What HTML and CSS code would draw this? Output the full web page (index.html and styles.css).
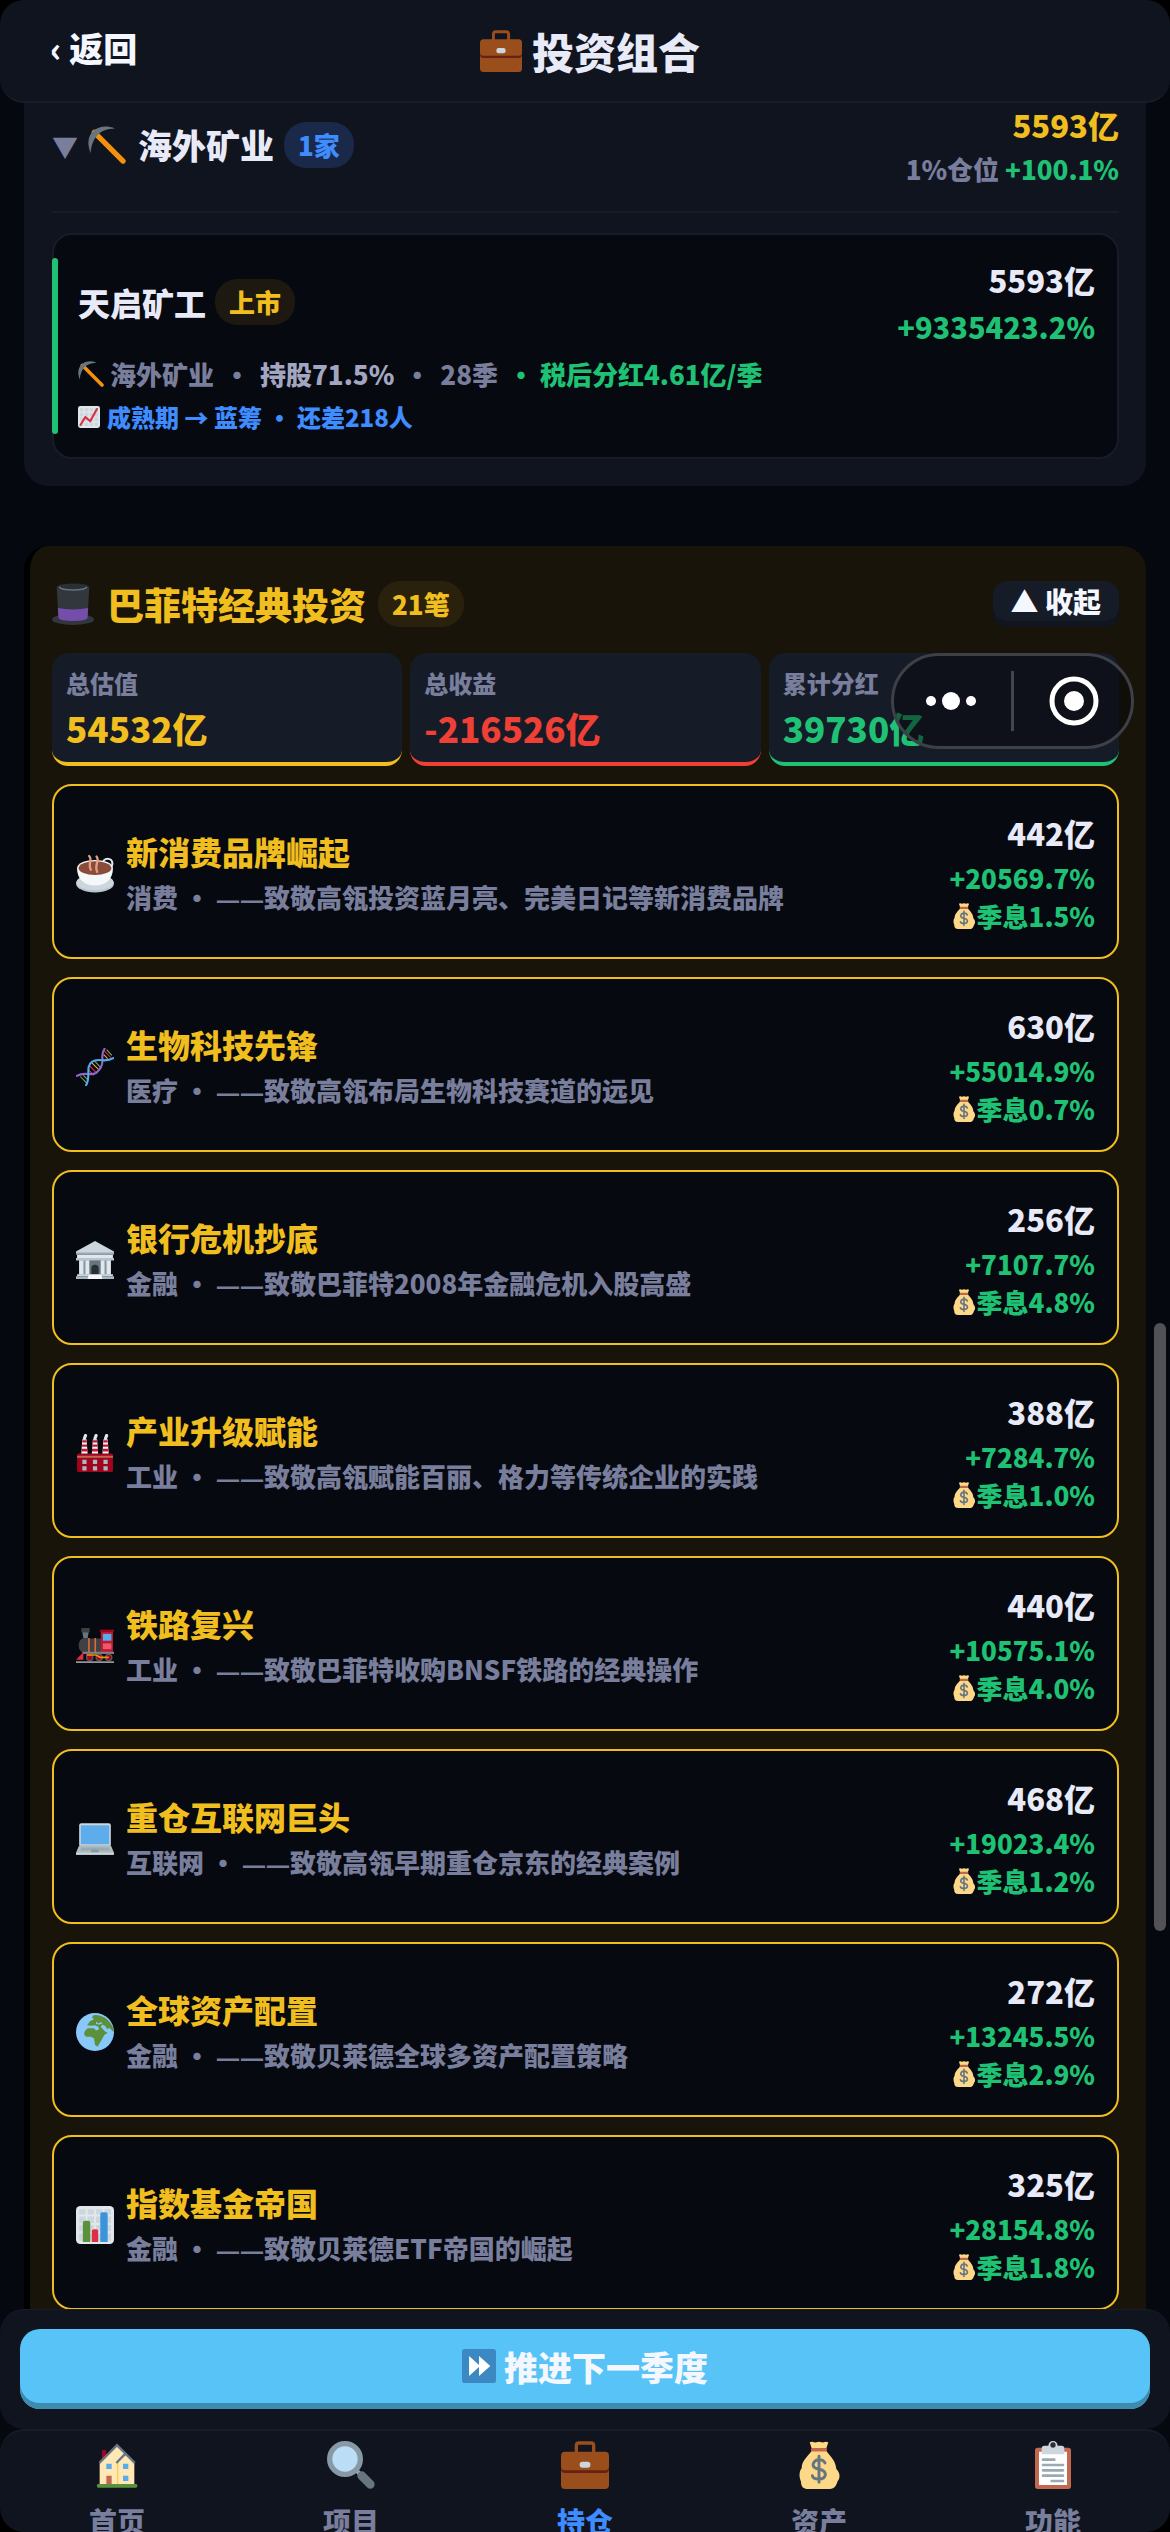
FILE: index.html
```
<!DOCTYPE html>
<html lang="zh-CN">
<head>
<meta charset="utf-8">
<meta name="viewport" content="width=device-width, initial-scale=1">
<title>投资组合</title>
<link rel="stylesheet" href="styles.css">
</head>
<body>
<svg class="sprite" aria-hidden="true">
  <symbol id="i-case" viewBox="0 0 36 36">
    <path d="M11.500 9V3.500Q11.500 1.500 13.500 1.500H22.500Q24.500 1.500 24.500 3.500V9" fill="none" stroke="#9a4e1c" stroke-width="2.500"/>
    <path d="M3 8H33Q36 8 36 11V33Q36 36 33 36H3Q0 36 0 33V11Q0 8 3 8Z" fill="#9a4e1c"/>
    <path d="M0 19Q0 22 3 22H33Q36 22 36 19V21Q36 24 33 24H3Q0 24 0 21Z" fill="#662113"/>
    <rect x="14" y="15.500" width="8" height="4.500" rx="2" fill="#ccd6dd"/>
  </symbol>
  <symbol id="i-pick" viewBox="0 0 36 36">
    <path d="M6 6L33.200 33.200" stroke="#f4900c" stroke-width="5" stroke-linecap="round"/>
    <path d="M2.500 25.700C-1.500 16 .5 9 5 4.800C10 0 18 -.8 25.600 2.300C18 2.600 13 4.600 9.600 8C5.500 12 3 18 2.500 25.700Z" fill="#66757f"/>
  </symbol>
  <symbol id="i-rise" viewBox="0 0 36 36">
    <rect width="36" height="36" rx="4" fill="#e1e8ed"/>
    <path d="M3 3h6v6H3zM11 3h6v6h-6zM19 3h6v6h-6zM27 3h6v6h-6zM3 11h6v6H3zM11 11h6v6h-6zM19 11h6v6h-6zM27 11h6v6h-6zM3 19h6v6H3zM11 19h6v6h-6zM19 19h6v6h-6zM27 19h6v6h-6zM3 27h6v6H3zM11 27h6v6h-6zM19 27h6v6h-6zM27 27h6v6h-6z" fill="#ccd6dd"/>
    <path d="M4 31L12 18L20 25L31 5" fill="none" stroke="#dd2e44" stroke-width="3.500" stroke-linecap="round" stroke-linejoin="round"/>
  </symbol>
  <symbol id="i-bars" viewBox="0 0 36 36">
    <rect width="36" height="36" rx="4" fill="#e1e8ed"/>
    <path d="M3 3h6v5H3zM11 3h6v5h-6zM19 3h6v5h-6zM27 3h6v5h-6zM3 10h6v6H3zM11 10h6v6h-6zM19 10h6v6h-6zM27 10h6v6h-6zM3 18h6v6H3zM11 18h6v6h-6zM19 18h6v6h-6zM27 18h6v6h-6zM3 26h6v7H3zM11 26h6v7h-6zM19 26h6v7h-6zM27 26h6v7h-6z" fill="#ccd6dd"/>
    <path d="M6.500 34V16q0-2 2-2h3q2 0 2 2v18z" fill="#5c913b"/>
    <path d="M15 34V24q0-2 2-2h2q2 0 2 2v10z" fill="#dd2e44"/>
    <path d="M23 34V8q0-2 2-2h3q2 0 2 2v26z" fill="#3b94d9"/>
  </symbol>
  <symbol id="i-hat" viewBox="0 0 36 36">
    <ellipse cx="18" cy="31.200" rx="18" ry="4.800" fill="#31373d"/>
    <path d="M4 3.500H32L30.500 29Q30 32 18 32Q6 32 5.500 29Z" fill="#31373d"/>
    <path d="M5 21.500Q18 24 31 21.500L30.500 30Q29 32.500 18 32.500Q7 32.500 5.500 30Z" fill="#744eaa"/>
    <ellipse cx="18" cy="3.600" rx="14" ry="3.200" fill="#292f33"/>
    <path d="M6 3.500Q8 6 18 6T30 3.500" fill="none" stroke="#66757f" stroke-width="1.300"/>
  </symbol>
  <symbol id="i-cup" viewBox="0 0 36 36">
    <ellipse cx="18" cy="27" rx="18" ry="8.500" fill="#b8c5cd"/>
    <ellipse cx="18" cy="26" rx="17.500" ry="7.500" fill="#ccd6dd"/>
    <circle cx="30" cy="8" r="4.500" fill="none" stroke="#e1e8ed" stroke-width="2"/>
    <path d="M1 12.500C1 2 35 2 35 12.500C35 22 29 29 18 29S1 22 1 12.500Z" fill="#f5f8fa"/>
    <ellipse cx="18" cy="12.500" rx="15.500" ry="6.500" fill="#8a4b38"/>
    <path d="M12.500 1C16 4 11 8 14 14M19.500 1.500C23 5 17 9 20 16" fill="none" stroke="#e39f85" stroke-width="2.200" stroke-linecap="round"/>
  </symbol>
  <symbol id="i-dna" viewBox="0 0 36 36">
    <path d="M4 27L10 33M7 26L11 30" stroke="#77b255" stroke-width="1"/>
    <path d="M12 21L17 26M13 17L20 24M27 3L33 9" stroke="#dd2e44" stroke-width="1"/>
    <path d="M15 14L22 21M26 6L30 10" stroke="#ffac33" stroke-width="1"/>
    <path d="M18 13L24 19M29 1.500L34 7" stroke="#77b255" stroke-width="1"/>
    <path d="M.8 26.500C8 22 14 27 19 23.500C25 19 25.500 14 25 9.500C24.600 5 25.500 3 27 .8" fill="none" stroke="#9266cc" stroke-width="2" stroke-linecap="round"/>
    <path d="M9.500 35.300C13 30 11 23 12 18C13.500 11 20 11 25 11.600C30 12 33 11 35.300 9.500" fill="none" stroke="#55acee" stroke-width="2" stroke-linecap="round"/>
  </symbol>
  <symbol id="i-bank" viewBox="0 0 36 36">
    <path d="M3 18H33V33H3Z" fill="#8899a6"/>
    <path d="M18 0L36 10V12H0V10Z" fill="#ccd6dd"/>
    <path d="M0 11H36V13H0Z" fill="#9aaab4"/>
    <path d="M1 13H35V16H1Z" fill="#e1e8ed"/>
    <path d="M0 16H36V18.500H0Z" fill="#b8c5cd"/>
    <path d="M3 18.500h4v13H3zM9 18.500h3.500v13H9zM23.500 18.500H27v13h-3.500zM29 18.500h4v13h-4z" fill="#e1e8ed"/>
    <path d="M13 18.500h10V32H13z" fill="#66757f"/>
    <path d="M14.500 32V26Q14.500 22.500 18 22.500T21.500 26V32Z" fill="#292f33"/>
    <path d="M1 31.500H35V33.500H1Z" fill="#ccd6dd"/><path d="M0 33.500H36V36H0Z" fill="#aab8c2"/>
    <path d="M12 32H24L25 36H11Z" fill="#f5f8fa"/>
  </symbol>
  <symbol id="i-factory" viewBox="0 0 36 36">
    <path d="M6 5h4l1 14H5zM16 5h4l1 14h-6zM26 5h4l1 14h-6z" fill="#f5f8fa"/>
    <path d="M6 6h4v2H6zM5.500 10h5v2h-5zM5.200 14h5.600v2.500H5.200zM16 6h4v2h-4zM15.500 10h5v2h-5zM15.200 14h5.600v2.500h-5.600zM26 6h4v2h-4zM25.500 10h5v2h-5zM25.200 14h5.600v2.500h-5.600z" fill="#be1931"/>
    <path d="M8 4L9 1.500M18 4L19 1.500M28 4L29 1.500" stroke="#e1e8ed" stroke-width="3" stroke-linecap="round"/>
    <rect x="1" y="18.500" width="34" height="17.500" rx="1.500" fill="#a0041e"/>
    <path d="M1 20.500H35V22.500H1Z" fill="#c1694f"/>
    <path d="M6 24.500h4v4H6zM16 24.500h4v4h-4zM26 24.500h4v4h-4zM6 30.500h4v4H6zM16 30.500h4v4h-4zM26 30.500h4v4h-4z" fill="#aab8c2"/>
  </symbol>
  <symbol id="i-train" viewBox="0 0 36 36">
    <path d="M5 1h8v4H5z" fill="#414042"/><path d="M6 5h6l-1 6H7z" fill="#66757f"/>
    <path d="M6 11H24V24H6Q2.500 22 2.500 17.500T6 11Z" fill="#414042"/>
    <path d="M11.500 10.500h1.500V24h-1.500zM17.500 10.500h1.500V24h-1.500z" fill="#e06a3c"/>
    <path d="M23.500 4H35V24H23.500Z" fill="#be1931"/><path d="M22.500 2.500H36V4.500H22.500Z" fill="#a0041e"/>
    <path d="M25.500 6.500h8V13h-8z" fill="#55acee"/><path d="M25.500 15.500h8V21h-8z" fill="#ea596e"/>
    <path d="M6 23.500H36V25.500H6Z" fill="#808285"/><path d="M0 31L7 24V31Z" fill="#dd2e44"/>
    <circle cx="13" cy="29" r="3" fill="#a0041e" stroke="#58595b" stroke-width="1.200"/><circle cx="22" cy="29" r="3" fill="#a0041e" stroke="#58595b" stroke-width="1.200"/><circle cx="31" cy="29" r="3" fill="#a0041e" stroke="#58595b" stroke-width="1.200"/>
    <path d="M10 26.500H19L23 28.800H31" fill="none" stroke="#f4900c" stroke-width="1.500"/>
    <path d="M0 32.500H36V34H0Z" fill="#939598"/>
  </symbol>
  <symbol id="i-laptop" viewBox="0 0 36 36">
    <rect x="3" y="3" width="30" height="22" rx="2" fill="#ccd6dd"/><path d="M4.500 5h27v18h-27z" fill="#5dadec"/>
    <path d="M3 24H33L36 31V33H0V31Z" fill="#aebbc1"/><path d="M5 26H31L32 29H4Z" fill="#9aaab4"/><path d="M0 31H36V32Q36 33 35 33H1Q0 33 0 32Z" fill="#ccd6dd"/><path d="M15 28H21L22 30.500H14Z" fill="#8899a6"/>
  </symbol>
  <symbol id="i-globe" viewBox="0 0 36 36">
    <circle cx="18" cy="18" r="18" fill="#88c9f9"/>
    <path d="M17 2C22 1 31 4 35.500 14.500L35.500 18L32 14.500L29 15L28 12.500L25 11L23.500 13L27 17L30 19L27 20.500L24.500 25L20.500 32L18 30L17 24L14 22.500L9.500 22.500L7.500 20L8.500 17L11 14.500L17 14.500L19 16.500L22 15.500L21 13L18 11.500L14.500 12L10.500 11.500L13 8L17 6L15 4Z" fill="#5c913b"/>
    <path d="M19 8L21 10L24 8.500L25 10L22 11L19 10.500Z" fill="#88c9f9"/>
  </symbol>
  <symbol id="i-next" viewBox="0 0 36 36">
    <rect width="36" height="36" rx="3" fill="#3b88c3"/><path d="M7.500 7.500L18 17V7.500L30 18L18 28.500V19L7.500 28.500Z" fill="#fff"/>
  </symbol>
  <symbol id="i-home" viewBox="0 0 36 36">
    <path d="M6.700 6.700h3.100V14H6.700z" fill="#a0041e"/><path d="M18 4L31 16.500V33H5V16.500Z" fill="#ffe8b6"/>
    <path d="M18.500 16V33" stroke="#ffcc4d"/>
    <path d="M4.800 16.400L18 3.200L31.300 16.400M17.500 16.500L23.800 10" fill="none" stroke="#66757f" stroke-width="1.800"/>
    <path d="M10 17h4v4h-4zM22.500 17h4v4h-4zM22.500 26h4v4h-4z" fill="#55acee"/><path d="M10 26h4v7h-4z" fill="#c1694f"/>
    <rect x="3" y="32.200" width="30.200" height="2.800" rx="1" fill="#5c913b"/>
  </symbol>
  <symbol id="i-search" viewBox="0 0 36 36">
    <path d="M21 21L27 27" stroke="#9aaab4" stroke-width="3"/><path d="M26 26L32.500 32.500" stroke="#66757f" stroke-width="6.500" stroke-linecap="round"/>
    <circle cx="13.500" cy="13.500" r="11.500" fill="#bbddf5" stroke="#8899a6" stroke-width="4"/>
  </symbol>
  <symbol id="i-money" viewBox="0 0 36 36">
    <path d="M11 1L13 .5L15 1.200L18 .5L21 1.200L23 .5L25 1L23.500 5.500H12.500Z" fill="#ffd983"/>
    <path d="M12.500 7.500H23.500C27 12 30.500 15 31 21C34 24 34 28 32 30C31 33 30 36 26 36H10C6 36 4.500 34 4.500 30.500C3 27 3 23 5 20.500C5 15 9 12 12.500 7.500Z" fill="#fdd888"/>
    <rect x="12" y="5.200" width="12" height="2.600" rx="1" fill="#c1694f"/>
    <path d="M22.500 16.500Q21.500 14 18 14T13.500 17.500Q13.500 20.500 18 21.200T22.800 25Q22.500 28.500 18 28.500T13 26M18 11.500V31" fill="none" stroke="#67757f" stroke-width="2.200" stroke-linecap="round"/>
  </symbol>
  <symbol id="i-board" viewBox="0 0 36 36">
    <rect x="4.500" y="5" width="27" height="31" rx="2" fill="#c1694f"/><path d="M7.500 8H28.500V33H7.500Z" fill="#fff"/>
    <path d="M9.500 10V5.500Q9.500 3.500 11.500 3.500H14.500Q15 0 18 0T21.500 3.500H24.500Q26.500 3.500 26.500 5.500V10Z" fill="#ccd6dd"/><circle cx="18" cy="3" r="2" fill="#292f33"/>
    <path d="M10.500 14H19M10.500 18H25.500M10.500 22H25.500M10.500 26H25.500M17 30H25.500" stroke="#99aab5" stroke-width="2" stroke-linecap="round"/>
  </symbol>
</svg>

<header class="topbar">
  <a class="back" href="#">‹ 返回</a>
  <h1 class="title"><svg class="icon icon-lg"><use href="#i-case"/></svg>投资组合</h1>
</header>

<main class="content">
  <section class="panel sector">
    <div class="sector-head">
      <div class="sector-name">
        <span class="caret">▼</span>
        <svg class="icon icon-md"><use href="#i-pick"/></svg>
        <h2>海外矿业</h2>
        <span class="badge blue">1家</span>
      </div>
      <div class="sector-value">
        <div class="amount gold">5593亿</div>
        <div class="note">1%仓位 <span class="green">+100.1%</span></div>
      </div>
    </div>
    <article class="company">
      <div class="company-top">
        <div class="company-name"><h3>天启矿工</h3><span class="badge gold">上市</span></div>
        <div class="company-value"><div class="amount">5593亿</div><div class="rate green">+9335423.2%</div></div>
      </div>
      <div class="facts">
        <span class="fact"><svg class="icon icon-xs"><use href="#i-pick"/></svg>海外矿业</span><span>•</span><span class="bright">持股71.5%</span><span>•</span><span>28季</span><span class="green">• 税后分红4.61亿/季</span>
      </div>
      <div class="stage"><svg class="icon icon-2xs"><use href="#i-rise"/></svg>成熟期 → 蓝筹 • 还差218人</div>
    </article>
  </section>

  <section class="panel classics">
    <div class="classics-head">
      <svg class="icon icon-lg"><use href="#i-hat"/></svg>
      <h2>巴菲特经典投资</h2>
      <span class="badge gold">21笔</span>
      <button class="collapse" type="button">▲ 收起</button>
    </div>
    <div class="stats">
      <div class="stat gold"><span class="label">总估值</span><span class="value">54532亿</span></div>
      <div class="stat red"><span class="label">总收益</span><span class="value">-216526亿</span></div>
      <div class="stat green"><span class="label">累计分红</span><span class="value">39730亿</span></div>
    </div>
    <ul class="deals">
      <li class="deal"><svg class="icon icon-sm"><use href="#i-cup"/></svg><div class="deal-text"><h3>新消费品牌崛起</h3><p>消费 • <span class="dash">——</span>致敬高瓴投资蓝月亮、完美日记等新消费品牌</p></div><div class="deal-value"><b>442亿</b><span>+20569.7%</span><span><svg class="icon icon-coin"><use href="#i-money"/></svg>季息1.5%</span></div></li>
      <li class="deal"><svg class="icon icon-sm"><use href="#i-dna"/></svg><div class="deal-text"><h3>生物科技先锋</h3><p>医疗 • <span class="dash">——</span>致敬高瓴布局生物科技赛道的远见</p></div><div class="deal-value"><b>630亿</b><span>+55014.9%</span><span><svg class="icon icon-coin"><use href="#i-money"/></svg>季息0.7%</span></div></li>
      <li class="deal"><svg class="icon icon-sm"><use href="#i-bank"/></svg><div class="deal-text"><h3>银行危机抄底</h3><p>金融 • <span class="dash">——</span>致敬巴菲特2008年金融危机入股高盛</p></div><div class="deal-value"><b>256亿</b><span>+7107.7%</span><span><svg class="icon icon-coin"><use href="#i-money"/></svg>季息4.8%</span></div></li>
      <li class="deal"><svg class="icon icon-sm"><use href="#i-factory"/></svg><div class="deal-text"><h3>产业升级赋能</h3><p>工业 • <span class="dash">——</span>致敬高瓴赋能百丽、格力等传统企业的实践</p></div><div class="deal-value"><b>388亿</b><span>+7284.7%</span><span><svg class="icon icon-coin"><use href="#i-money"/></svg>季息1.0%</span></div></li>
      <li class="deal"><svg class="icon icon-sm"><use href="#i-train"/></svg><div class="deal-text"><h3>铁路复兴</h3><p>工业 • <span class="dash">——</span>致敬巴菲特收购BNSF铁路的经典操作</p></div><div class="deal-value"><b>440亿</b><span>+10575.1%</span><span><svg class="icon icon-coin"><use href="#i-money"/></svg>季息4.0%</span></div></li>
      <li class="deal"><svg class="icon icon-sm"><use href="#i-laptop"/></svg><div class="deal-text"><h3>重仓互联网巨头</h3><p>互联网 • <span class="dash">——</span>致敬高瓴早期重仓京东的经典案例</p></div><div class="deal-value"><b>468亿</b><span>+19023.4%</span><span><svg class="icon icon-coin"><use href="#i-money"/></svg>季息1.2%</span></div></li>
      <li class="deal"><svg class="icon icon-sm"><use href="#i-globe"/></svg><div class="deal-text"><h3>全球资产配置</h3><p>金融 • <span class="dash">——</span>致敬贝莱德全球多资产配置策略</p></div><div class="deal-value"><b>272亿</b><span>+13245.5%</span><span><svg class="icon icon-coin"><use href="#i-money"/></svg>季息2.9%</span></div></li>
      <li class="deal"><svg class="icon icon-sm"><use href="#i-bars"/></svg><div class="deal-text"><h3>指数基金帝国</h3><p>金融 • <span class="dash">——</span>致敬贝莱德ETF帝国的崛起</p></div><div class="deal-value"><b>325亿</b><span>+28154.8%</span><span><svg class="icon icon-coin"><use href="#i-money"/></svg>季息1.8%</span></div></li>
    </ul>
  </section>
</main>

<div class="actionbar">
  <button class="advance" type="button"><svg class="icon icon-btn"><use href="#i-next"/></svg>推进下一季度</button>
</div>

<nav class="tabbar">
  <a class="tab" href="#"><svg class="icon icon-tab"><use href="#i-home"/></svg>首页</a>
  <a class="tab" href="#"><svg class="icon icon-tab"><use href="#i-search"/></svg>项目</a>
  <a class="tab active" href="#"><svg class="icon icon-tab"><use href="#i-case"/></svg>持仓</a>
  <a class="tab" href="#"><svg class="icon icon-tab"><use href="#i-money"/></svg>资产</a>
  <a class="tab" href="#"><svg class="icon icon-tab"><use href="#i-board"/></svg>功能</a>
</nav>

<div class="capsule">
  <button class="capsule-btn" type="button" aria-label="更多"><svg viewBox="0 0 50 50"><circle cx="5" cy="25" r="5"/><circle cx="25" cy="25" r="9"/><circle cx="45" cy="25" r="5"/></svg></button>
  <button class="capsule-btn" type="button" aria-label="关闭"><svg viewBox="0 0 50 50"><circle cx="25" cy="25" r="22" fill="none" stroke="#fff" stroke-width="5"/><circle cx="25" cy="25" r="10"/></svg></button>
</div>
<div class="scroll-thumb"></div>
</body>
</html>
```
FILE: styles.css
```
:root {
  --bg: #05080f;
  --panel: #10141f;
  --line: #171c28;
  --raised: #161b28;
  --text: #e8eaf8;
  --muted: #787e9b;
  --gold: #f0be1e;
  --green: #1fc275;
  --red: #ee4035;
  --blue: #3f8cff;
}

* { box-sizing: border-box; }

body {
  margin: 0;
  height: 100vh;
  display: flex;
  flex-direction: column;
  overflow: hidden;
  position: relative;
  background: linear-gradient(#000 50px, var(--bg) 50px, var(--bg) calc(100% - 50px), #000 calc(100% - 50px));
  color: var(--text);
  font-family: "Noto Sans CJK SC", sans-serif;
  font-size: 26px;
  font-weight: 900;
}

h1, h2, h3, p, ul { margin: 0; padding: 0; font-weight: 900; }
a { color: inherit; text-decoration: none; }
button { font: inherit; color: inherit; border: 0; padding: 0; }

.sprite { position: absolute; width: 0; height: 0; }
.icon { display: block; flex: none; }
.icon-2xs { width: 22px; height: 22px; }
.icon-xs { width: 26px; height: 26px; }
.icon-coin { width: 26px; height: 26px; }
.icon-btn { width: 34px; height: 34px; }
.icon-sm, .icon-md { width: 38px; height: 38px; }
.icon-lg { width: 42px; height: 42px; }
.icon-tab { width: 48px; height: 48px; }

.gold { color: var(--gold); }
.green { color: var(--green); }
.red { color: var(--red); }

/* Header */
.topbar {
  flex: none;
  height: 103px;
  padding: 0 40px 0 50px;
  display: grid;
  grid-template-columns: 1fr auto 1fr;
  align-items: center;
  background: var(--panel);
  border-bottom: 2px solid var(--line);
  border-radius: 24px;
}
.back { font-size: 34px; line-height: 50px; padding-bottom: 6px; color: #f5f7ff; }
.title { display: flex; align-items: center; gap: 10px; font-size: 42px; line-height: 60px; }

/* Content */
.content {
  flex: 1;
  min-height: 0;
  overflow: hidden;
  padding: 0 24px;
  display: flex;
  flex-direction: column;
  gap: 60px;
}
.panel { flex: none; border-radius: 24px; }
.badge { padding: 0 14px; line-height: 46px; border-radius: 22px; }
.badge.blue { color: var(--blue); background: #1a294a; }
.badge.gold { background: #2a210d; }
.amount { font-size: 31px; }

.sector { padding: 0 27px 27px 28px; border-radius: 0 0 24px 24px; background: var(--panel); }
.sector-head {
  display: flex;
  justify-content: space-between;
  align-items: center;
  padding-bottom: 20px;
  border-bottom: 2px solid var(--line);
}
.sector-name { display: flex; align-items: center; padding-bottom: 4px; }
.sector-name h2 { font-size: 34px; line-height: 48px; margin: 0 10px 0 12px; }
.caret { width: 36px; color: var(--muted); }
.sector-value { text-align: right; line-height: 44px; }
.note { color: var(--muted); }

.company {
  position: relative;
  margin-top: 20px;
  padding: 22px 22px 19px 24px;
  background: #06090f;
  border: 2px solid var(--line);
  border-radius: 20px;
}
.company::before {
  content: "";
  position: absolute;
  left: -2px;
  top: 23px;
  bottom: 23px;
  width: 6px;
  border-radius: 3px;
  background: var(--green);
}
.company-top { display: flex; justify-content: space-between; align-items: center; margin-bottom: 3px; }
.company-name { display: flex; align-items: center; gap: 9px; padding-bottom: 2px; }
.company-name h3 { font-size: 32px; line-height: 46px; }
.company .badge.gold { background: #1e1910; }
.company-value { text-align: right; line-height: 46px; }
.rate { font-size: 29px; }
.facts { display: flex; gap: 10px; line-height: 44px; color: var(--muted); }
.fact { display: flex; align-items: center; gap: 6px; }
.bright { color: #a3a6c0; }
.stage { display: flex; align-items: center; gap: 7px; font-size: 24px; line-height: 42px; color: var(--blue); }

.classics {
  padding: 35px 27px 34px 22px;
  border-left: 6px solid #000;
  background: #181409;
}
.classics-head { display: flex; align-items: center; height: 46px; }
.classics-head h2 { font-size: 37px; line-height: 46px; color: var(--gold); margin: 0 12px 0 13px; }
.collapse {
  margin-left: auto;
  height: 46px;
  padding: 0 18px 6px;
  font-size: 28px;
  line-height: 40px;
  color: #f5f7ff;
  background: var(--raised);
  border-radius: 14px;
  box-shadow: inset 0 -6px #11151d;
}

.stats { display: grid; grid-template-columns: repeat(3, 1fr); gap: 8px; margin-top: 26px; }
.stat {
  display: flex;
  flex-direction: column;
  height: 113px;
  padding: 10px 14px 0;
  border-bottom: 4px solid;
  border-radius: 16px;
  background: var(--raised);
}
.label { font-size: 24px; line-height: 40px; color: var(--muted); }
.value { font-size: 35px; line-height: 50px; }

.deals { list-style: none; display: flex; flex-direction: column; gap: 18px; margin-top: 18px; }
.deal {
  display: flex;
  align-items: center;
  gap: 12px;
  height: 175px;
  padding: 0 22px;
  background: #06090f;
  border: 2px solid var(--gold);
  border-radius: 20px;
}
.deal > .icon { margin-top: 4px; }
.deal-text { flex: 1; padding-top: 5px; }
.deal-text h3 { font-size: 32px; line-height: 48px; color: var(--gold); }
.deal-text p { line-height: 44px; color: var(--muted); }
.dash { font-family: "Noto Sans", sans-serif; font-size: 24px; font-weight: 700; }
.deal-value { display: flex; flex-direction: column; align-items: flex-end; line-height: 38px; color: var(--green); }
.deal-value b { font-size: 31px; font-weight: 900; line-height: 48px; margin-bottom: 2px; color: var(--text); }
.deal-value span { display: flex; align-items: center; }

/* Bottom bars */
.actionbar {
  flex: none;
  padding: 19px 20px 20px;
  background: var(--panel);
  border-top: 1px solid var(--line);
  border-radius: 24px;
}
.advance {
  width: 100%;
  height: 80px;
  padding-bottom: 6px;
  display: flex;
  align-items: center;
  justify-content: center;
  gap: 8px;
  font-size: 34px;
  color: #f5f7ff;
  background: #58c3f7;
  border-radius: 20px;
  box-shadow: inset 0 -6px #3f8bb0;
}
.tabbar {
  flex: none;
  height: 103px;
  overflow: hidden;
  display: grid;
  grid-template-columns: repeat(5, 1fr);
  padding-top: 10px;
  background: var(--panel);
  border-top: 2px solid var(--line);
  border-radius: 24px;
}
.tab { display: flex; flex-direction: column; align-items: center; gap: 12px; font-size: 28px; line-height: 40px; color: var(--muted); }
.tab.active { color: var(--blue); }

/* Floating capsule and scroll indicator */
.capsule {
  position: absolute;
  top: 653px;
  right: 36px;
  width: 243px;
  height: 96px;
  display: grid;
  grid-template-columns: 117px 1fr;
  border: 3px solid #3e4048;
  border-radius: 48px;
  background: rgba(5, 7, 10, .5);
}
.capsule-btn { display: grid; place-items: center; padding-right: 4px; background: none; }
.capsule-btn + .capsule-btn { padding: 0 0 0 6px; background: linear-gradient(#44464d, #44464d) left center / 3px 60px no-repeat; }
.capsule-btn svg { width: 50px; height: 50px; fill: #fff; }
.scroll-thumb {
  position: absolute;
  right: 4px;
  top: 1323px;
  width: 12px;
  height: 608px;
  border-radius: 6px;
  background: #525256;
}
```
